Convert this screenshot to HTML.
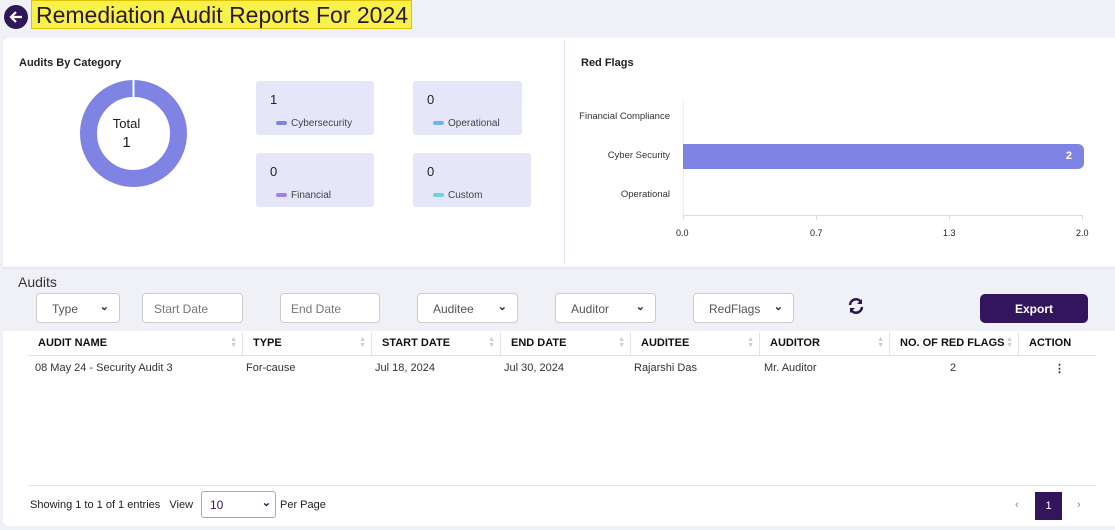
<!DOCTYPE html>
<html><head><style>
*{box-sizing:border-box;margin:0;padding:0}
body{width:1115px;height:530px;background:#f0f1f7;font-family:"Liberation Sans",sans-serif;position:relative;overflow:hidden;color:#222}
.a{position:absolute}
.card{background:#fff}
.box{position:absolute;background:#e5e6f8;border-radius:3px;width:118px;height:54px}
.box .n{position:absolute;left:14px;top:11px;font-size:13px}
.box .l{position:absolute;left:20px;top:37px;font-size:10px;color:#444}
.box .l i{display:inline-block;width:11px;height:4px;border-radius:2px;margin-right:4px;vertical-align:middle}
.sel{position:absolute;top:293px;height:30px;background:#fff;border:1px solid #ccc;border-radius:4px;font-size:12px;color:#555;padding:8px 0 0 15px}
.sel b{position:absolute;right:10px;top:6px;font-size:11px;color:#333}
.th{position:absolute;top:332px;height:24px;font-size:11px;font-weight:bold;color:#111;padding:5px 0 0 10px;border-right:1px solid #e2e3ee}
.td{position:absolute;top:362px;font-size:11px;color:#333}
.ar{position:absolute;right:5px;top:5px;color:#ccc;font-size:7px;line-height:6px}
.lab{position:absolute;left:560px;width:110px;text-align:right;font-size:9.5px;color:#333}
.tk{position:absolute;top:215px;width:1px;height:5px;background:#ddd}
</style></head><body>
<div class="a" style="left:4px;top:5px;width:24px;height:24px;border-radius:50%;background:#2f1656"></div>
<svg class="a" style="left:8px;top:9px" width="16" height="16" viewBox="0 0 16 16"><path d="M14 8H3M8 3L3 8l5 5" stroke="#fff" stroke-width="2.2" fill="none"/></svg>
<div class="a" style="left:31px;top:0;width:381px;height:29px;background:#f7f14a;border:1px solid #e0c000;font-size:23px;color:#2a1a2a;padding:1px 0 0 4px">Remediation Audit Reports For 2024</div>

<div class="a card" style="left:3px;top:38px;width:1112px;height:228px;border-radius:6px 0 0 0"></div>
<div class="a" style="left:564px;top:40px;width:1px;height:224px;background:#e4e4f2"></div>
<div class="a" style="left:19px;top:57px;font-size:11px;font-weight:bold">Audits By Category</div>
<svg class="a" style="left:80px;top:80px" width="107" height="107"><circle cx="53.5" cy="53.5" r="45" stroke="#7f84e4" stroke-width="17" fill="none"/><line x1="53.5" y1="0" x2="53.5" y2="18" stroke="#fff" stroke-width="2"/></svg>
<div class="a" style="left:80px;top:116px;width:93px;text-align:center;font-size:13px">Total</div>
<div class="a" style="left:80px;top:134px;width:93px;text-align:center;font-size:15px">1</div>
<div class="box" style="left:256px;top:81px"><span class="n">1</span><span class="l"><i style="background:#7f84e4"></i>Cybersecurity</span></div>
<div class="box" style="left:413px;top:81px;width:109px"><span class="n">0</span><span class="l"><i style="background:#6fb6ee"></i>Operational</span></div>
<div class="box" style="left:256px;top:153px"><span class="n">0</span><span class="l"><i style="background:#a57ee8"></i>Financial</span></div>
<div class="box" style="left:413px;top:153px"><span class="n">0</span><span class="l"><i style="background:#6dd3e2"></i>Custom</span></div>

<div class="a" style="left:581px;top:57px;font-size:11px;font-weight:bold">Red Flags</div>
<div class="lab" style="top:111px">Financial Compliance</div>
<div class="lab" style="top:150px">Cyber Security</div>
<div class="lab" style="top:189px">Operational</div>
<div class="a" style="left:683px;top:100px;width:1px;height:115px;background:#eee"></div>
<div class="a" style="left:683px;top:215px;width:400px;height:1px;background:#ddd"></div>
<div class="tk" style="left:683px"></div><div class="tk" style="left:816px"></div><div class="tk" style="left:949px"></div><div class="tk" style="left:1082px"></div>
<div class="a" style="left:683px;top:144px;width:401px;height:25px;background:#7f84e4;border-radius:0 6px 6px 0;color:#fff;font-size:11px;font-weight:bold;text-align:right;padding:6px 12px 0 0">2</div>
<div class="a" style="left:676px;top:228px;font-size:9px">0.0</div>
<div class="a" style="left:810px;top:228px;font-size:9px">0.7</div>
<div class="a" style="left:943px;top:228px;font-size:9px">1.3</div>
<div class="a" style="left:1076px;top:228px;font-size:9px">2.0</div>

<div class="a" style="left:3px;top:268px;width:1112px;height:63px;background:#f0f1f7;border-top:1px solid #e4e4ee"></div>
<div class="a" style="left:18px;top:274px;font-size:14px;color:#333">Audits</div>
<div class="sel" style="left:36px;width:84px">Type<b>⌄</b></div>
<div class="sel" style="left:142px;width:101px;padding-left:11px;color:#777">Start Date</div>
<div class="sel" style="left:280px;width:100px;padding-left:10px;color:#777">End Date</div>
<div class="sel" style="left:417px;width:101px">Auditee<b>⌄</b></div>
<div class="sel" style="left:555px;width:101px">Auditor<b>⌄</b></div>
<div class="sel" style="left:693px;width:101px">RedFlags<b>⌄</b></div>
<svg class="a" style="left:847px;top:297px" width="18" height="18" viewBox="0 0 18 18"><path d="M3 8a6 6 0 0 1 11-3M15 10a6 6 0 0 1-11 3" stroke="#2a1550" stroke-width="2.5" fill="none"/><path d="M15 2v5h-5zM3 16v-5h5z" fill="#2a1550"/></svg>
<div class="a" style="left:980px;top:294px;width:108px;height:29px;background:#32155c;border-radius:5px;color:#fff;font-size:12px;font-weight:bold;text-align:center;padding-top:8px">Export</div>

<div class="a card" style="left:3px;top:331px;width:1112px;height:195px;border-radius:0 0 0 6px"></div>
<div class="a" style="left:28px;top:355px;width:1068px;height:1px;background:#e2e3ee"></div>
<div class="th" style="left:28px;width:215px">AUDIT NAME<span class="ar">▲<br>▼</span></div>
<div class="th" style="left:243px;width:129px">TYPE<span class="ar">▲<br>▼</span></div>
<div class="th" style="left:372px;width:129px">START DATE<span class="ar">▲<br>▼</span></div>
<div class="th" style="left:501px;width:130px">END DATE<span class="ar">▲<br>▼</span></div>
<div class="th" style="left:631px;width:129px">AUDITEE<span class="ar">▲<br>▼</span></div>
<div class="th" style="left:760px;width:130px">AUDITOR<span class="ar">▲<br>▼</span></div>
<div class="th" style="left:890px;width:129px">NO. OF RED FLAGS<span class="ar">▲<br>▼</span></div>
<div class="th" style="left:1019px;width:77px;border:none">ACTION</div>
<div class="td" style="left:35px">08 May 24 - Security Audit 3</div>
<div class="td" style="left:246px">For-cause</div>
<div class="td" style="left:375px">Jul 18, 2024</div>
<div class="td" style="left:504px">Jul 30, 2024</div>
<div class="td" style="left:634px">Rajarshi Das</div>
<div class="td" style="left:764px">Mr. Auditor</div>
<div class="td" style="left:950px">2</div>
<div class="td" style="left:1054px;font-weight:bold">⋮</div>
<div class="a" style="left:28px;top:485px;width:1068px;height:1px;background:#e2e3ee"></div>
<div class="a" style="left:30px;top:499px;font-size:11px">Showing 1 to 1 of 1 entries &nbsp; View</div>
<div class="a" style="left:201px;top:491px;width:75px;height:27px;border:1px solid #aaa;border-radius:3px;background:#fff;font-size:12px;color:#32155c;padding:6px 0 0 8px">10<b style="position:absolute;right:4px;top:4px;font-size:11px">⌄</b></div>
<div class="a" style="left:280px;top:499px;font-size:11px">Per Page</div>
<div class="a" style="left:1015px;top:499px;font-size:11px;color:#888">‹</div>
<div class="a" style="left:1035px;top:492px;width:27px;height:28px;background:#32155c;color:#fff;font-size:11px;text-align:center;padding-top:8px">1</div>
<div class="a" style="left:1077px;top:499px;font-size:11px;color:#888">›</div>
</body></html>
